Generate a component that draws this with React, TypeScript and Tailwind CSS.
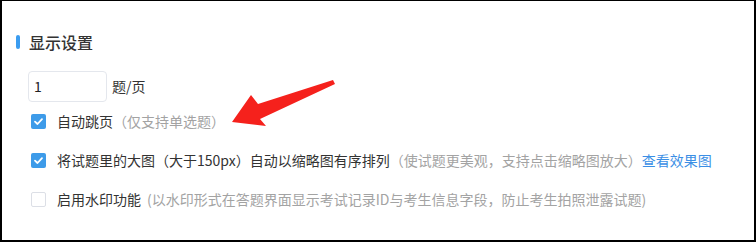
import React from 'react';

const font = { fontFamily: '"Microsoft YaHei", "Noto Sans CJK SC", "Liberation Sans", sans-serif' };

function Check({ checked }: { checked: boolean }) {
  return checked ? (
    <span className="w-[15px] h-[15px] rounded-[2px] bg-[#3d9be9] flex items-center justify-center flex-shrink-0">
      <svg width="11" height="11" viewBox="0 0 11 11">
        <path d="M2 5.6 L4.5 8 L9 3.2" fill="none" stroke="#fff" strokeWidth="1.8" strokeLinecap="round" strokeLinejoin="round" />
      </svg>
    </span>
  ) : (
    <span className="w-[15px] h-[15px] rounded-[2px] border border-[#dcdfe6] bg-white flex-shrink-0" />
  );
}

export default function App() {
  return (
    <div
      className="relative w-[756px] h-[242px] bg-white border-t border-l-2 border-r-2 border-b-2 border-black text-[14px] text-[#333]"
      style={font}
    >
      {/* Title */}
      <div className="flex items-center pl-[14px] pt-[28px] h-[53px]">
        <span className="w-[4px] h-[14px] rounded-[2px] bg-[#3b9cf0]" />
        <span className="ml-[9px] text-[16px] leading-[24px] font-medium text-[#333]">显示设置</span>
      </div>

      <div className="pl-[26px] pt-[17px] flex flex-col">
        {/* Per page */}
        <div className="flex items-center">
          <div className="w-[79px] h-[31px] border border-[#e4e7ed] rounded-[4px] flex items-center px-[5px] text-[14px] text-[#222]">
            1
          </div>
          <span className="ml-[5px]">题/页</span>
        </div>

        {/* Options */}
        <div className="flex flex-col">
          <div className="h-[39px] flex items-center pl-[3px]">
            <Check checked />
            <span className="ml-[11px]">自动跳页</span>
            <span className="text-[#a3a3a3]">（仅支持单选题）</span>
          </div>
          <div className="h-[39px] flex items-center pl-[3px]">
            <Check checked />
            <span className="ml-[11px]">将试题里的大图（大于150px）自动以缩略图有序排列</span>
            <span className="text-[#a3a3a3]">（使试题更美观，支持点击缩略图放大）</span>
            <span className="text-[#3b8fe5]">查看效果图</span>
          </div>
          <div className="h-[39px] flex items-center pl-[3px]">
            <Check checked={false} />
            <span className="ml-[11px]">启用水印功能</span>
            <span className="text-[#a3a3a3] ml-[6px]">(以水印形式在答题界面显示考试记录ID与考生信息字段，防止考生拍照泄露试题)</span>
          </div>
        </div>
      </div>

      {/* Annotation arrow */}
      <svg className="absolute left-0 top-0 pointer-events-none" width="756" height="242">
        <polygon points="331,79 333,83 258,118 264,125 230,121 249,94 256,103" fill="#f5211c" />
      </svg>
    </div>
  );
}
